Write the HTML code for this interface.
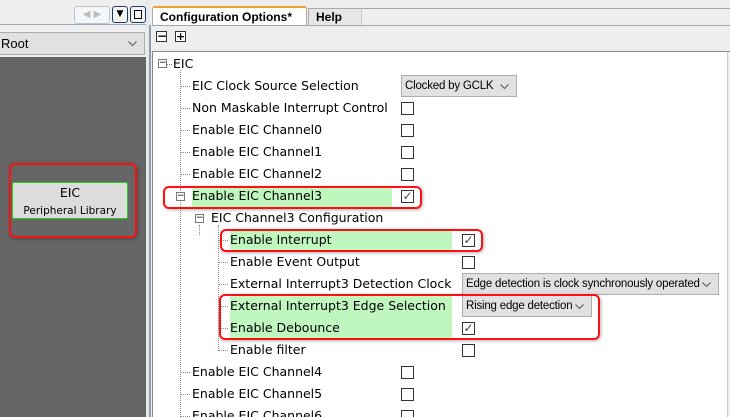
<!DOCTYPE html>
<html style="overflow:hidden;width:730px;height:417px"><head><meta charset="utf-8"><style>
*{margin:0;padding:0;box-sizing:border-box}
body{width:730px;height:417px;overflow:hidden;background:#eeeeee;font-family:"DejaVu Sans","Liberation Sans",sans-serif;font-size:12.5px;color:#000;position:relative}
.a{position:absolute}
.t{position:absolute;white-space:nowrap;line-height:16px}
.cb{position:absolute;width:13px;height:13px;border:1px solid #333;background:#fff}
.cb.c{font-size:12px;line-height:11px;text-align:center;color:#444}
.combo{position:absolute;height:22px;background:#e1e1e1;border:1px solid #adadad;font-family:"Liberation Sans",sans-serif;font-size:11.5px;letter-spacing:-0.2px;line-height:20px;padding-left:3px;white-space:nowrap;overflow:hidden}
.combo svg,.root svg{position:absolute;right:7px;top:8px}
.g{position:absolute;background:#bff7bf}
.r{position:absolute;border:2px solid #ff1010;border-radius:6px;box-shadow:1px 1px 3px rgba(0,0,0,.3)}
.hl{position:absolute;border-top:1px dotted #888;height:1px}
.vl{position:absolute;border-left:1px dotted #888;width:1px}
.pm{position:absolute;width:9px;height:9px;border:1px solid #777;background:#fff;font-size:9px;line-height:7px;text-align:center}
</style></head><body>
<div class="a" style="left:0;top:24px;width:147px;height:1px;background:#9aa8b8"></div>
<div class="a" style="left:74px;top:6px;width:36px;height:18px;border:1px solid #b8c4d0;border-radius:3px;background:#f4f6f8;color:#bbb;font-size:10px;line-height:16px;text-align:center">◀ ▶</div>
<div class="a" style="left:112px;top:6px;width:16px;height:17px;border:1px solid #1e3a5f;border-radius:3px;background:#f4f4f4;font-size:9px;line-height:15px;text-align:center">▼</div>
<div class="a" style="left:130px;top:6px;width:16px;height:17px;border:1px solid #1e3a5f;border-radius:3px;background:#f4f4f4"><div class="a" style="left:3px;top:3px;width:8px;height:9px;border:1px solid #000"></div></div>
<div class="a root" style="left:-2px;top:32px;width:147px;height:23px;background:#e1e1e1;border:1px solid #adadad;font-family:'Liberation Sans',sans-serif;font-size:13px;line-height:21px;padding-left:2px">Root<svg width="9" height="5"><path d="M0.5 0.5L4.5 4.5L8.5 0.5" fill="none" stroke="#555"/></svg></div>
<div class="a" style="left:0;top:57px;width:146px;height:360px;background:#656565"></div>
<div class="a" style="left:146px;top:0;width:4px;height:417px;background:#e6eaee"></div>
<div class="a" style="left:149px;top:25px;width:2px;height:392px;background:#8e9cae"></div>
<div class="r" style="left:9px;top:163px;width:128px;height:75px"></div>
<div class="a" style="left:12px;top:182px;width:116px;height:37px;background:#dcdcdc;border:1px solid #20d020;border-radius:2px;text-align:center;font-size:12.5px;line-height:17px;padding-top:1px">EIC<br><span style="font-size:10.5px">Peripheral Library</span></div>
<div class="a" style="left:152px;top:6px;width:155px;height:20px;background:#fff;border:1px solid #aaa;border-top:2px solid #f0a030;border-bottom:none;border-radius:3px 3px 0 0;font-family:'Liberation Sans',sans-serif;font-weight:bold;font-size:12px;line-height:18px;padding-left:7px">Configuration Options*</div>
<div class="a" style="left:308px;top:8px;width:54px;height:17px;background:#e6e6e6;border:1px solid #aaa;border-bottom:none;font-family:'Liberation Sans',sans-serif;font-weight:bold;font-size:12px;line-height:17px;padding-left:7px">Help</div>
<div class="a" style="left:361px;top:8px;width:369px;height:17px;border-top:1px solid #9aa8b8;border-left:1px solid #ccc"></div>
<div class="a" style="left:152px;top:25px;width:578px;height:1px;background:#9aa8b8"></div>
<div class="a" style="left:156px;top:31px;width:11px;height:11px;border:1px solid #333;background:#fff;font-size:12px;line-height:8px;text-align:center;font-weight:bold">−</div>
<div class="a" style="left:175px;top:31px;width:11px;height:11px;border:1px solid #333;background:#fff;font-size:11px;line-height:9px;text-align:center;font-weight:bold">+</div>
<div class="a" style="left:152px;top:51px;width:578px;height:366px;background:#fff;border-top:1px solid #888;border-left:1px solid #888"></div>
<div class="a" style="left:727px;top:52px;width:3px;height:365px;background:#f0f0f0;border-left:1px solid #ccc"></div>
<div class="g" style="left:192px;top:186px;width:200px;height:22px"></div>
<div class="g" style="left:230px;top:230px;width:222px;height:21px"></div>
<div class="g" style="left:230px;top:295px;width:222px;height:44px"></div>
<div class="vl" style="left:180px;top:70px;height:347px"></div>
<div class="vl" style="left:199px;top:225px;height:10px"></div>
<div class="vl" style="left:218px;top:225px;height:126px"></div>
<div class="hl" style="left:167px;top:64px;width:5px"></div>
<div class="pm" style="left:158px;top:59px">−</div>
<div class="pm" style="left:176px;top:192px">−</div>
<div class="pm" style="left:195px;top:214px">−</div>
<div class="hl" style="left:181px;top:86px;width:9px"></div>
<div class="hl" style="left:181px;top:108px;width:9px"></div>
<div class="hl" style="left:181px;top:130px;width:9px"></div>
<div class="hl" style="left:181px;top:152px;width:9px"></div>
<div class="hl" style="left:181px;top:174px;width:9px"></div>
<div class="hl" style="left:181px;top:372px;width:9px"></div>
<div class="hl" style="left:181px;top:394px;width:9px"></div>
<div class="hl" style="left:181px;top:416px;width:9px"></div>
<div class="hl" style="left:219px;top:240px;width:9px"></div>
<div class="hl" style="left:219px;top:262px;width:9px"></div>
<div class="hl" style="left:219px;top:284px;width:9px"></div>
<div class="hl" style="left:219px;top:306px;width:9px"></div>
<div class="hl" style="left:219px;top:328px;width:9px"></div>
<div class="hl" style="left:219px;top:350px;width:9px"></div>
<div class="t" style="left:173px;top:56px">EIC</div>
<div class="t" style="left:192px;top:78px">EIC Clock Source Selection</div>
<div class="t" style="left:192px;top:100px">Non Maskable Interrupt Control</div>
<div class="t" style="left:192px;top:122px">Enable EIC Channel0</div>
<div class="t" style="left:192px;top:144px">Enable EIC Channel1</div>
<div class="t" style="left:192px;top:166px">Enable EIC Channel2</div>
<div class="t" style="left:192px;top:188px">Enable EIC Channel3</div>
<div class="t" style="left:211px;top:210px">EIC Channel3 Configuration</div>
<div class="t" style="left:230px;top:232px">Enable Interrupt</div>
<div class="t" style="left:230px;top:254px">Enable Event Output</div>
<div class="t" style="left:230px;top:276px">External Interrupt3 Detection Clock</div>
<div class="t" style="left:230px;top:298px">External Interrupt3 Edge Selection</div>
<div class="t" style="left:230px;top:320px">Enable Debounce</div>
<div class="t" style="left:230px;top:342px">Enable filter</div>
<div class="t" style="left:192px;top:364px">Enable EIC Channel4</div>
<div class="t" style="left:192px;top:386px">Enable EIC Channel5</div>
<div class="t" style="left:192px;top:408px">Enable EIC Channel6</div>
<div class="combo" style="left:401px;top:75px;width:116px">Clocked by GCLK<svg width="9" height="5"><path d="M0.5 0.5L4.5 4.5L8.5 0.5" fill="none" stroke="#555"/></svg></div>
<div class="cb" style="left:401px;top:102px"></div>
<div class="cb" style="left:401px;top:124px"></div>
<div class="cb" style="left:401px;top:146px"></div>
<div class="cb" style="left:401px;top:168px"></div>
<div class="cb c" style="left:401px;top:190px">✓</div>
<div class="cb c" style="left:462px;top:234px">✓</div>
<div class="cb" style="left:462px;top:256px"></div>
<div class="combo" style="left:462px;top:273px;width:257px">Edge detection is clock synchronously operated<svg width="9" height="5"><path d="M0.5 0.5L4.5 4.5L8.5 0.5" fill="none" stroke="#555"/></svg></div>
<div class="combo" style="left:462px;top:295px;width:130px">Rising edge detection<svg width="9" height="5"><path d="M0.5 0.5L4.5 4.5L8.5 0.5" fill="none" stroke="#555"/></svg></div>
<div class="cb c" style="left:462px;top:322px">✓</div>
<div class="cb" style="left:462px;top:344px"></div>
<div class="cb" style="left:401px;top:366px"></div>
<div class="cb" style="left:401px;top:388px"></div>
<div class="cb" style="left:401px;top:410px"></div>
<div class="r" style="left:163px;top:186px;width:259px;height:23px"></div>
<div class="r" style="left:220px;top:229px;width:263px;height:23px"></div>
<div class="r" style="left:219px;top:294px;width:381px;height:46px"></div>
</body></html>
